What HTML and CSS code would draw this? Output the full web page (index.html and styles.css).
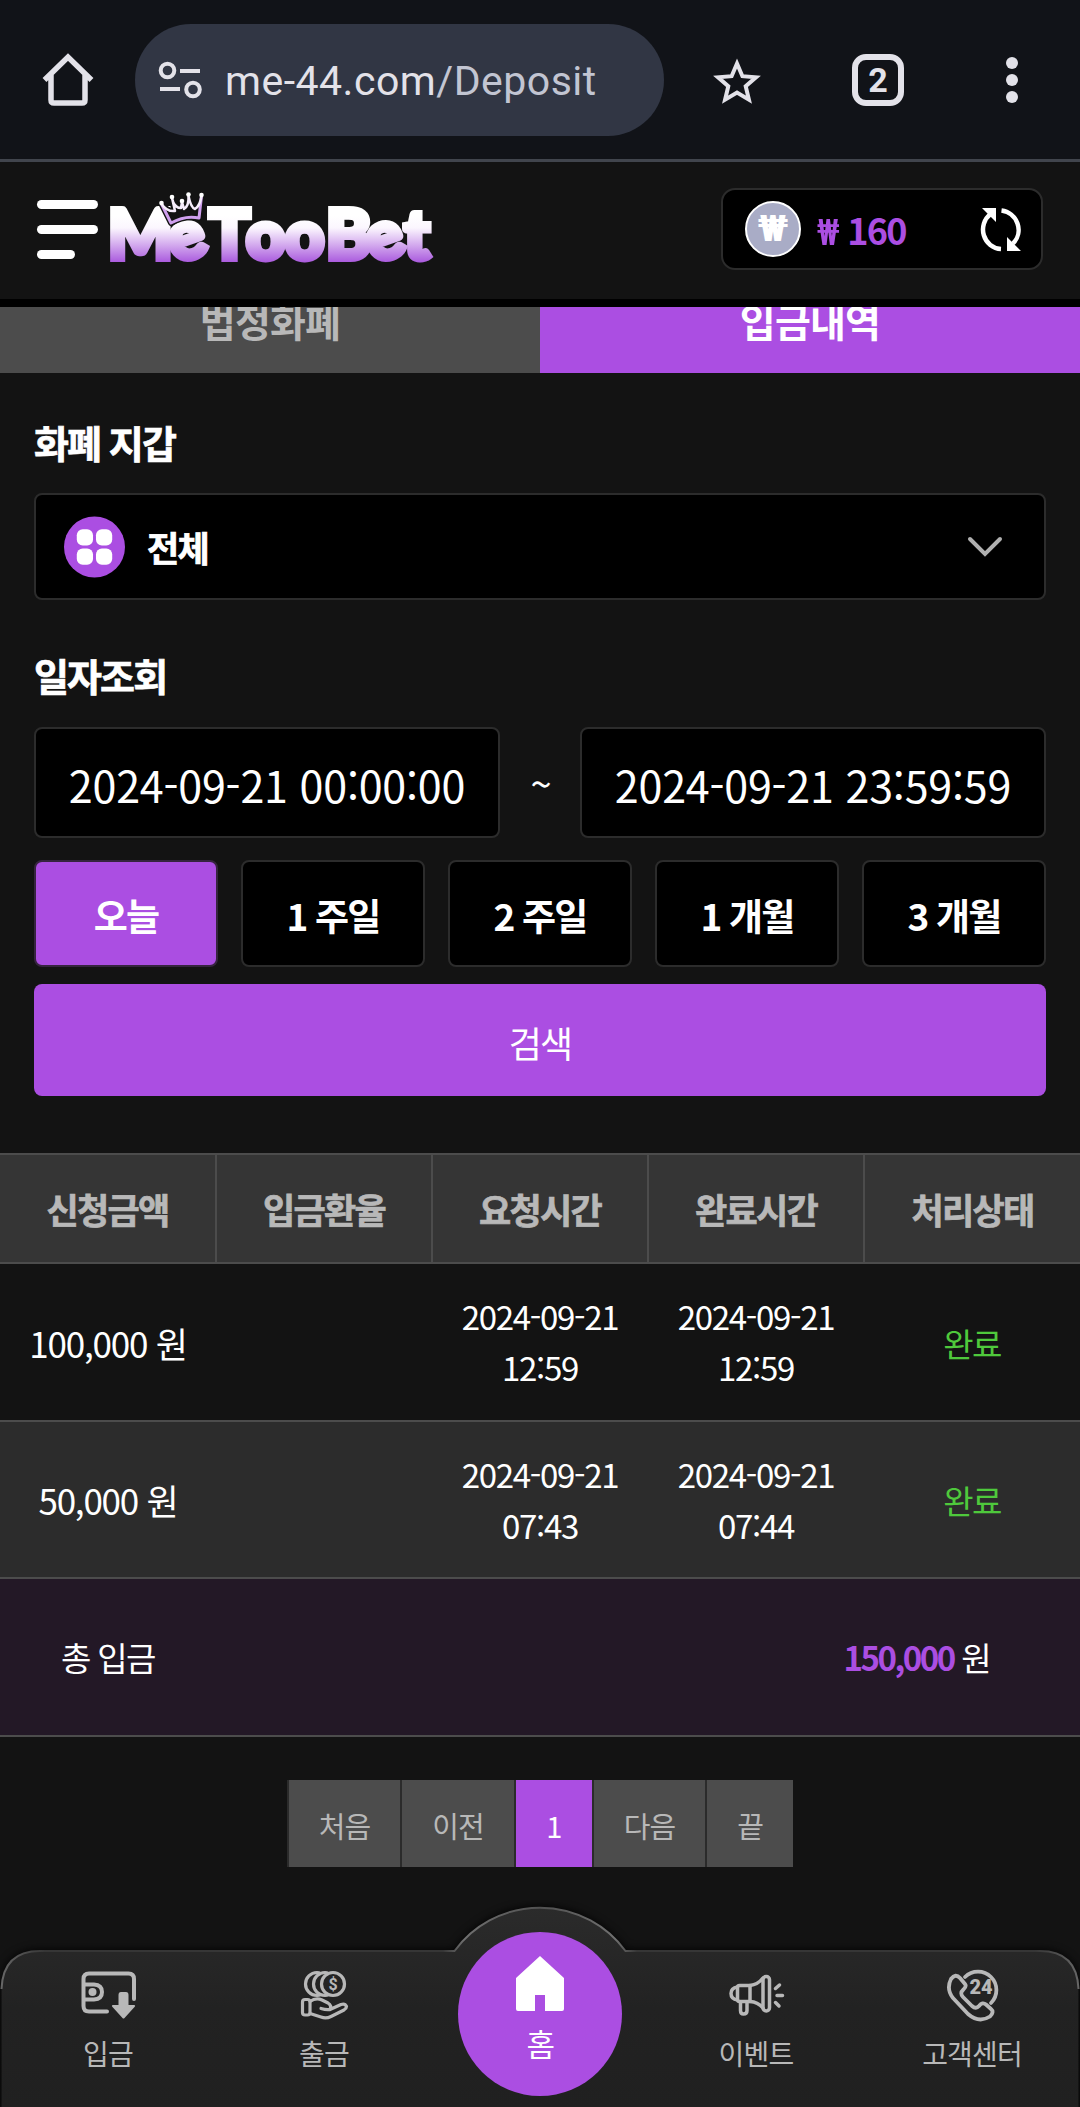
FILE: index.html
```html
<!DOCTYPE html>
<html lang="ko">
<head>
  <meta charset="UTF-8" />
  <title>입금내역</title>
  <link rel="stylesheet" href="styles.css">
</head>
<body>
  <div class="browser-bar">
    <svg class="home-icon" width="52" height="54" viewBox="0 0 52 54">
      <path d="M2.500 27 L26 4 L49.500 27 M9 22 V47 Q9 50 12 50 H40 Q43 50 43 47 V22" fill="none" stroke="#e3e2e9" stroke-width="5.500"/>
    </svg>
    <div class="url-pill">
      <svg class="tune-icon" width="44" height="38" viewBox="0 0 44 38">
        <g fill="none" stroke="#e3e2e9" stroke-width="4">
          <circle cx="9.500" cy="9.500" r="6.800"/>
          <circle cx="35" cy="28.500" r="6.800"/>
          <path d="M22 10 H42 M2 28 H22"/>
        </g>
      </svg>
      <span class="url">me-44.com<span class="path">/Deposit</span></span>
    </div>
    <svg class="star-icon" width="50" height="48" viewBox="0 0 50 48">
      <path d="M25 5.500 L30.400 18.200 L44 19.300 L33.700 28.200 L36.900 41.600 L25 34.500 L13.100 41.600 L16.300 28.200 L6 19.300 L19.600 18.200 Z" fill="none" stroke="#e3e2e9" stroke-width="4"/>
    </svg>
    <div class="tab-count">2</div>
    <svg class="dots-icon" width="12" height="48" viewBox="0 0 12 48">
      <g fill="#e3e2e9">
        <circle cx="6" cy="7" r="6"/>
        <circle cx="6" cy="24" r="6"/>
        <circle cx="6" cy="41" r="6"/>
      </g>
    </svg>
  </div>

  <header class="header">
    <div class="menu">
      <span></span>
      <span></span>
      <span class="short"></span>
    </div>
    <svg class="logo" width="330" height="90" viewBox="0 -4 330 90">
      <defs>
        <linearGradient id="logoFill" gradientUnits="userSpaceOnUse" x1="0" y1="28" x2="0" y2="76">
          <stop offset="0" stop-color="#ffffff"/>
          <stop offset="0.250" stop-color="#fbf6fe"/>
          <stop offset="1" stop-color="#a653dc"/>
        </linearGradient>
      </defs>
      <text class="logo-text" x="3 71 104 141 180 221 269 299" y="71 76 71 71 71 71 76 71" rotate="0 -20 0 0 0 0 -20 0" fill="url(#logoFill)" stroke="url(#logoFill)">MeTooBet</text>
      <g fill="none" stroke-linejoin="round">
        <path d="M56.500 16 L66 35 Q80 27 94 30 L96.500 8 Q95 18 90 21 Q86 20 83.500 8 Q84 18 79 21 L77 14 L76 20 Q69 20 67 10 L70 23 Q62 24 56.500 16 Z" fill="#131313" stroke="#131313" stroke-width="6"/>
        <path d="M56.500 16 L66 35 Q80 27 94 30 L96.500 8" stroke="#cf9fee" stroke-width="3"/>
        <path d="M56.500 16 Q62 24 70 23 L67 10 Q69 20 76 20 L77 14 L79 21 Q84 18 83.500 8 Q86 20 90 21 Q95 18 96.500 8" stroke="#f6edfb" stroke-width="2.500"/>
      </g>
      <g fill="#ffffff">
        <circle cx="56.500" cy="15" r="2.300"/>
        <circle cx="67" cy="9" r="2.300"/>
        <circle cx="77" cy="13" r="2.300"/>
        <circle cx="83.500" cy="6.500" r="2.300"/>
        <circle cx="96.500" cy="7" r="2.300"/>
      </g>
    </svg>
    <div class="balance">
      <span class="coin">₩</span>
      <span class="amount"><span class="won">₩</span> 160</span>
      <svg class="refresh" width="46" height="46" viewBox="0 0 46 46">
        <path d="M22 43 A19 19.500 0 0 1 11.500 8 M22.500 4.500 A19.500 19.500 0 0 1 34 37.500" fill="none" stroke="#fff" stroke-width="4.500"/>
        <path d="M3 2 H17 V16 Z M28 31 V45 H42 Z" fill="#fff"/>
      </svg>
    </div>
  </header>

  <div class="tabs">
    <div class="tab"><span>법정화폐</span></div>
    <div class="tab active"><span>입금내역</span></div>
  </div>

  <main class="content">
    <h2 class="title">화폐 지갑</h2>
    <div class="select">
      <svg width="61" height="62" viewBox="0 0 62 62">
        <circle cx="31" cy="31" r="31" fill="#ab4ee2"/>
        <g fill="#fff">
          <rect x="13" y="13" width="16.500" height="16.500" rx="6"/>
          <rect x="32.500" y="13" width="16.500" height="16.500" rx="6"/>
          <rect x="13" y="32.500" width="16.500" height="16.500" rx="6"/>
          <rect x="32.500" y="32.500" width="16.500" height="16.500" rx="6"/>
        </g>
      </svg>
      <span class="select-text">전체</span>
      <svg width="36" height="22" viewBox="0 0 36 22">
        <path d="M3 3 L18 18 L33 3" fill="none" stroke="#b0b0b0" stroke-width="4" stroke-linecap="round"/>
      </svg>
    </div>

    <h2 class="title second">일자조회</h2>
    <div class="dates">
      <div class="date">2024-09-21 00:00:00</div>
      <span class="tilde">~</span>
      <div class="date">2024-09-21 23:59:59</div>
    </div>
    <div class="periods">
      <button class="period active">오늘</button>
      <button class="period">1 주일</button>
      <button class="period">2 주일</button>
      <button class="period">1 개월</button>
      <button class="period">3 개월</button>
    </div>
    <button class="search">검색</button>
  </main>

  <div class="table">
    <div class="row head">
      <div>신청금액</div>
      <div>입금환율</div>
      <div>요청시간</div>
      <div>완료시간</div>
      <div>처리상태</div>
    </div>
    <div class="row">
      <div class="money">100,000 원</div>
      <div></div>
      <div class="time">2024-09-21<br>12:59</div>
      <div class="time">2024-09-21<br>12:59</div>
      <div class="done">완료</div>
    </div>
    <div class="row even">
      <div class="money">50,000 원</div>
      <div></div>
      <div class="time">2024-09-21<br>07:43</div>
      <div class="time">2024-09-21<br>07:44</div>
      <div class="done">완료</div>
    </div>
    <div class="total">
      <span>총 입금</span>
      <span><b>150,000</b> 원</span>
    </div>
  </div>

  <div class="pagination">
    <a class="page">처음</a>
    <a class="page">이전</a>
    <a class="page current">1</a>
    <a class="page">다음</a>
    <a class="page last">끝</a>
  </div>

  <nav class="bottom-nav">
    <!-- bar with the raised bump behind the home button -->
    <svg class="nav-bg" width="1080" height="207" viewBox="0 0 1080 207">
      <defs>
        <linearGradient id="navFill" x1="0" y1="0" x2="0" y2="1">
          <stop offset="0" stop-color="#2b2b2b"/>
          <stop offset="0.500" stop-color="#222222"/>
          <stop offset="1" stop-color="#202020"/>
        </linearGradient>
        <linearGradient id="navLine" x1="0" y1="0" x2="1" y2="0">
          <stop offset="0" stop-color="#666666"/>
          <stop offset="0.040" stop-color="#363636"/>
          <stop offset="0.410" stop-color="#363636"/>
          <stop offset="0.430" stop-color="#707070"/>
          <stop offset="0.500" stop-color="#505050"/>
          <stop offset="0.570" stop-color="#707070"/>
          <stop offset="0.590" stop-color="#363636"/>
          <stop offset="0.960" stop-color="#363636"/>
          <stop offset="1" stop-color="#666666"/>
        </linearGradient>
      </defs>
      <path class="nav-shape" d="M1.500 210 V89 Q3 51 40 51 H454.500 A106 106 0 0 1 625.500 51 H1040 Q1077 51 1078.500 89 V210 Z" fill="url(#navFill)"/>
      <path d="M1.500 89 Q3 51 40 51 H454.500 A106 106 0 0 1 625.500 51 H1040 Q1077 51 1078.500 89" fill="none" stroke="url(#navLine)" stroke-width="2"/>
    </svg>
    <div class="nav-item">
      <svg width="56" height="58" viewBox="-1 -5 56 58">
        <g fill="none" stroke="#b8b8b8" stroke-width="4" stroke-linecap="round">
          <path d="M53 28 V8 Q53 2.500 47.500 2.500 H8 Q2.500 2.500 2.500 8 V35 Q2.500 40.500 8 40.500 H26"/>
          <path d="M3 13.500 H13 Q21 14 21 21 Q21 28 13 28.500 H3"/>
        </g>
        <circle cx="11.500" cy="21" r="4" fill="#b8b8b8"/>
        <path d="M40 21 H45 Q47.500 21 47.500 24 V34 H53 Q55 34.500 53.500 36 L43.500 47 Q42.500 48 41.500 47 L31.500 36 Q30 34.500 32 34 H37.500 V24 Q37.500 21 40 21 Z" fill="#b8b8b8"/>
      </svg>
      <span>입금</span>
    </div>
    <div class="nav-item">
      <svg width="50" height="58" viewBox="-1 -4 50 58">
        <g fill="none" stroke="#b8b8b8" stroke-width="3.200" stroke-linecap="round" stroke-linejoin="round">
          <circle cx="33" cy="14" r="11.500"/>
          <path d="M25 2.500 A11.500 11.500 0 0 0 25 25.500 Q27 25.500 28 24.500 M25 2.500 Q27 2.500 28 3.500"/>
          <path d="M17 2.500 A11.500 11.500 0 0 0 17 25.500 Q19 25.500 20 24.500 M17 2.500 Q19 2.500 20 3.500"/>
          <rect x="2.500" y="29.500" width="7.500" height="15.500" rx="2.500"/>
          <path d="M10 31.500 Q16 27 22 30 L28 33 Q32 35.500 30 39.500 Q26 40 21 38.500 M30 39.500 L41 34.500 Q45 33 46.500 36.500 Q46.500 38.500 44 40 L31 46.500 Q26 49 21 47 L10 43.500"/>
        </g>
        <text class="coin-sign" x="33" y="19.500">$</text>
      </svg>
      <span>출금</span>
    </div>
    <div class="nav-item home">
      <div class="home-button">
        <svg width="50" height="56" viewBox="0 0 50 56">
          <path d="M25 0 L49 22 V53 Q49 55 47 55 H30 V39 H20 V55 H3 Q1 55 1 53 V22 Z" fill="#fff"/>
        </svg>
        <span>홈</span>
      </div>
    </div>
    <div class="nav-item">
      <svg width="58" height="58" viewBox="-1 -6 58 58">
        <g fill="none" stroke="#b8b8b8" stroke-width="3.500" stroke-linecap="round" stroke-linejoin="round">
          <path d="M22 13.500 H11.500 Q9.500 13.500 9.500 15.500 V27 Q9.500 29.500 11.500 29.500 H22 Z"/>
          <path d="M9.500 15 Q3 16 3 21.500 Q3 27 9.500 28"/>
          <path d="M22 13.500 Q30 12.500 35 6 M22 29.500 Q30 30 35 36"/>
          <rect x="35" y="4.500" width="6.500" height="34.500" rx="3.200"/>
          <path d="M12.500 30 V38.500 Q12.500 42 15.500 42 Q19 42 19 38.500 V30"/>
          <path d="M47.500 16.500 L51.500 13 M49 23.500 H54.500 M47.500 30.500 L51 34"/>
        </g>
      </svg>
      <span>이벤트</span>
    </div>
    <div class="nav-item">
      <svg width="56" height="58" viewBox="-1 1 56 58">
        <g fill="none" stroke="#b8b8b8" stroke-width="3.800" stroke-linecap="round" stroke-linejoin="round">
          <path d="M20 12 A18.300 18.300 0 1 1 46 38"/>
          <path d="M6 14 Q10.500 8 15 13 L20 19 Q22 21.500 18 25 Q14.500 28 18 32 L27 41 Q31 44.500 34 41 Q37.500 36.500 41 39.500 L46 44 Q49.500 47 45 51.500 Q34 58.500 23 49 L8 33 Q1 24 6 14 Z"/>
        </g>
        <text class="hours" x="36" y="29">24</text>
      </svg>
      <span>고객센터</span>
    </div>
  </nav>
</body>
</html>
```

FILE: styles.css
```css
* {
  box-sizing: border-box;
  letter-spacing: -0.05em;
}
body {
  margin: 0;
  width: 1080px;
  height: 2107px;
  position: relative;
  overflow: hidden;
  background: #131313;
  color: #fff;
  font-family: "Noto Sans CJK KR", sans-serif;
}
svg {
  display: block;
  flex: none;
}

/* browser bar */
.browser-bar {
  display: flex;
  align-items: center;
  height: 162px;
  padding: 0 62px 2px 42px;
  background: #111318;
  border-bottom: 3px solid #41454d;
}
.url-pill {
  display: flex;
  align-items: center;
  width: 529px;
  height: 112px;
  margin: 3px 0 0 41px;
  padding-left: 23px;
  border-radius: 56px;
  background: #313644;
}
.home-icon {
  margin-top: 3px;
}
.url {
  margin: 2px 0 0 23px;
  font-family: Roboto, sans-serif;
  font-size: 41px;
  letter-spacing: 0.5px;
  color: #e3e2e9;
}
.url .path {
  color: #c2c5d2;
  letter-spacing: 0.5px;
}
.star-icon {
  margin: 6px 0 0 48px;
}
.tab-count {
  display: flex;
  align-items: center;
  justify-content: center;
  width: 52px;
  height: 52px;
  margin: 3px 0 0 90px;
  border: 6px solid #e3e2e9;
  border-radius: 14px;
  color: #e3e2e9;
  font-family: Roboto, sans-serif;
  font-size: 34px;
  font-weight: 700;
  letter-spacing: 0;
}
.dots-icon {
  margin: 3px 0 0 102px;
}

/* site header */
.header {
  position: relative;
  display: flex;
  align-items: center;
  height: 145px;
  padding: 0 37px 3px;
  background: #131313;
  border-bottom: 8px solid #000;
}
.menu {
  display: flex;
  flex-direction: column;
  gap: 16px;
  width: 61px;
}
.menu span {
  height: 9px;
  border-radius: 5px;
  background: #fff;
}
.menu .short {
  width: 38px;
}
.logo {
  margin-left: 7px;
}
.logo-text {
  font-family: Lato, sans-serif;
  font-size: 68px;
  font-weight: 900;
  letter-spacing: 0;
  stroke-width: 6px;
}
.balance {
  display: flex;
  align-items: center;
  width: 322px;
  height: 82px;
  margin-left: auto;
  padding: 0 16px 0 22px;
  border: 2px solid #2c2c2c;
  border-radius: 14px;
  background: #000;
}
.coin {
  display: flex;
  align-items: center;
  justify-content: center;
  width: 56px;
  height: 56px;
  border: 2px solid #fff;
  border-radius: 50%;
  background: #a9acc6;
  font-family: Roboto, sans-serif;
  font-size: 36px;
  font-weight: 900;
  letter-spacing: 0;
}
.amount {
  margin-left: 16px;
  font-size: 36px;
  font-weight: 700;
  color: #ab4ee2;
}
.won {
  display: inline-block;
  width: 22px;
  font-family: Roboto, sans-serif;
  font-size: 37px;
  transform: scaleX(0.75);
  transform-origin: left;
}
.refresh {
  margin-left: auto;
}

.tabs {
  display: flex;
  height: 66px;
  overflow: hidden;
}
.tab {
  display: flex;
  flex: 1;
  justify-content: center;
  background: #4c4c4c;
  color: #b8b8b8;
  font-size: 39px;
  font-weight: 700;
  line-height: 56px;
}
.tab span {
  margin-top: -15px;
  letter-spacing: -0.02em;
}
.tab.active {
  background: #ab4ee2;
  color: #fff;
}

/* search form */
.content {
  padding: 42px 34px 0;
}
.title {
  margin: 0 0 22px;
  padding-bottom: 2px;
  font-size: 38px;
  font-weight: 700;
  line-height: 54px;
  -webkit-text-stroke: 0.7px;
}
.title.second {
  margin-top: 48px;
  margin-bottom: 23px;
}
.select {
  display: flex;
  align-items: center;
  height: 107px;
  padding: 0 41px 0 28px;
  border: 2px solid #2c2c2c;
  border-radius: 8px;
  background: #000;
}
.select-text {
  flex: 1;
  margin-left: 22px;
  font-size: 35px;
  font-weight: 700;
  -webkit-text-stroke: 0.7px;
}
.dates {
  display: flex;
  align-items: center;
  justify-content: space-between;
}
.date {
  width: 466px;
  height: 111px;
  border: 2px solid #2c2c2c;
  border-radius: 8px;
  background: #000;
  font-size: 43px;
  letter-spacing: -0.2px;
  line-height: 111px;
  text-align: center;
}
.tilde {
  font-size: 38px;
}
.periods {
  display: grid;
  grid-template-columns: repeat(5, 1fr);
  gap: 23px;
  margin-top: 22px;
}
.period {
  height: 107px;
  padding: 3px 0 0;
  border: 2px solid #2c2c2c;
  border-radius: 8px;
  background: #000;
  color: #fff;
  font-family: inherit;
  font-size: 37px;
  font-weight: 700;
}
.period.active {
  border-color: #36243f;
  background: #ab4ee2;
}
.search {
  display: block;
  width: 100%;
  height: 112px;
  margin-top: 17px;
  padding: 4px 0 0;
  border: 0;
  border-radius: 8px;
  background: #ab4ee2;
  color: #fff;
  font-family: inherit;
  font-size: 36px;
}

/* history table */
.table {
  margin-top: 57px;
  border-top: 2px solid #4c4c4c;
  font-size: 33px;
  line-height: 51px;
}
.row {
  display: grid;
  grid-template-columns: repeat(5, 1fr);
  height: 158px;
  border-bottom: 2px solid #4c4c4c;
}
.row div {
  display: flex;
  align-items: center;
  justify-content: center;
  text-align: center;
}
.row.head {
  grid-template-columns: 217px 216px 216px 216px 215px;
  height: 109px;
  background: #353535;
  color: #b8b8b8;
  font-size: 35px;
  font-weight: 700;
  -webkit-text-stroke: 0.7px;
}
.row.head div:not(:last-child) {
  border-right: 2px solid #4c4c4c;
}
.row.even {
  height: 157px;
  background: #2c2c2c;
}
.row .money {
  font-size: 35px;
  letter-spacing: -0.035em;
}
.row .time {
  letter-spacing: -0.04em;
}
.row .done {
  padding-top: 2px;
  color: #4fc93c;
}
.total {
  display: flex;
  align-items: center;
  justify-content: space-between;
  height: 158px;
  padding: 0 90px 0 61px;
  border-bottom: 2px solid #4c4c4c;
  background: #231826;
}
.total b {
  color: #ab4ee2;
  font-weight: 700;
  letter-spacing: -0.075em;
}

.pagination {
  display: flex;
  justify-content: center;
  margin-top: 43px;
  font-size: 29px;
}
.page {
  width: 113.500px;
  height: 87px;
  border-left: 2px solid #2b2b2b;
  background: #4c4c4c;
  color: #b8b8b8;
  line-height: 90px;
  letter-spacing: -0.03em;
  text-align: center;
}
.page.current {
  width: 78px;
  background: #ab4ee2;
  color: #fff;
}
.page.last {
  width: 88px;
}

/* bottom navigation, floats over the page */
.bottom-nav {
  position: absolute;
  left: 0;
  bottom: 0;
  display: grid;
  grid-template-columns: repeat(5, 1fr);
  width: 1080px;
  height: 207px;
  color: #b8b8b8;
  font-size: 28px;
}
.nav-bg {
  position: absolute;
  left: 0;
  top: 0;
}
.nav-shape {
  filter: drop-shadow(0 -1px 4px #000);
}
.nav-item {
  position: relative;
  display: flex;
  flex-direction: column;
  align-items: center;
  padding-top: 66px;
}
.nav-item > span {
  margin-top: 8px;
  line-height: 42px;
  letter-spacing: -0.03em;
}
.nav-item.home {
  padding-top: 32px;
}
.home-button {
  display: flex;
  flex-direction: column;
  align-items: center;
  width: 164px;
  height: 164px;
  padding-top: 24px;
  border-radius: 50%;
  background: #ab4ee2;
  color: #fff;
  font-size: 31px;
}
.home-button span {
  margin-top: 7px;
  line-height: 48px;
}
.coin-sign,
.hours {
  fill: #b8b8b8;
  font-family: Roboto, sans-serif;
  font-weight: 700;
  text-anchor: middle;
  letter-spacing: 0;
}
.coin-sign {
  font-size: 16px;
}
.hours {
  font-size: 20px;
  font-weight: 900;
}
```
